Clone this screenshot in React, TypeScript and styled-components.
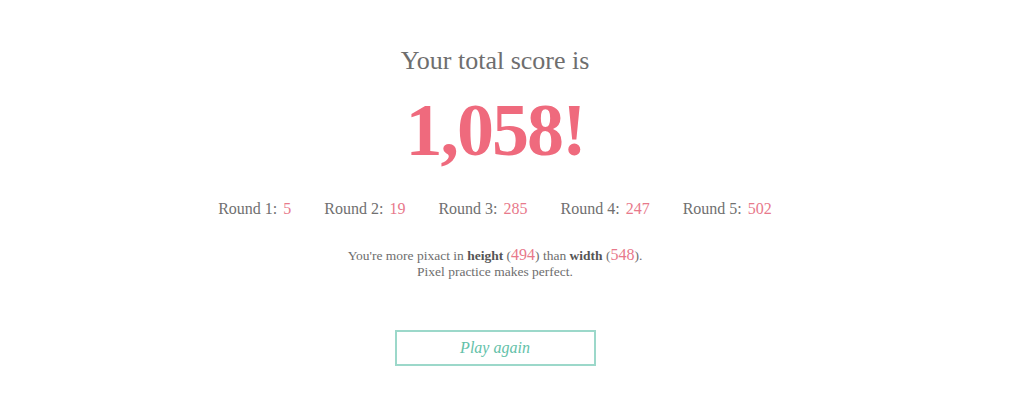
import styled, { createGlobalStyle } from 'styled-components'

const GlobalStyle = createGlobalStyle`
  html, body {
    margin: 0;
    padding: 0;
    background: #ffffff;
  }
  body {
    font-family: "Liberation Serif", "DejaVu Serif", serif;
  }
`

const Page = styled.main`
  width: 990px;
  display: flex;
  flex-direction: column;
  align-items: center;
  padding-top: 46px;
`

const Heading = styled.h2`
  margin: 0;
  font-size: 26px;
  font-weight: normal;
  line-height: 30px;
  color: #6e6e6e;
`

const Total = styled.h1`
  margin: 14px 0 0;
  font-size: 74px;
  font-weight: bold;
  line-height: 80px;
  letter-spacing: -2px;
  color: #ef6a7d;
`

const Rounds = styled.ul`
  list-style: none;
  margin: 29px 0 0;
  padding: 0;
  display: flex;
  gap: 33px;
`

const Round = styled.li`
  font-size: 16px;
  line-height: 20px;
  color: #707070;
`

const Score = styled.span`
  color: #e8798b;
  margin-left: 6px;
`

const Note = styled.p`
  margin: 29px 0 0;
  font-size: 13.5px;
  line-height: 16px;
  color: #6e6e6e;
  text-align: center;
`

const Dim = styled.b`
  color: #555555;
`

const Num = styled.span`
  color: #e8798b;
  font-size: 16px;
  line-height: 0;
`

const Button = styled.button`
  margin-top: 50px;
  width: 201px;
  height: 36px;
  background: #ffffff;
  border: 2px solid #9cd8ca;
  color: #63c1a8;
  font-family: "Liberation Serif", "DejaVu Serif", serif;
  font-style: italic;
  font-size: 16px;
  cursor: pointer;
`

const rounds = [5, 19, 285, 247, 502]

export default function App() {
  return (
    <>
      <GlobalStyle />
      <Page>
        <Heading>Your total score is</Heading>
        <Total>1,058!</Total>
        <Rounds>
          {rounds.map((s, i) => (
            <Round key={i}>
              Round {i + 1}:<Score>{s}</Score>
            </Round>
          ))}
        </Rounds>
        <Note>
          You're more pixact in <Dim>height</Dim> (<Num>494</Num>) than <Dim>width</Dim> (<Num>548</Num>).
          <br />
          Pixel practice makes perfect.
        </Note>
        <Button>Play again</Button>
      </Page>
    </>
  )
}
